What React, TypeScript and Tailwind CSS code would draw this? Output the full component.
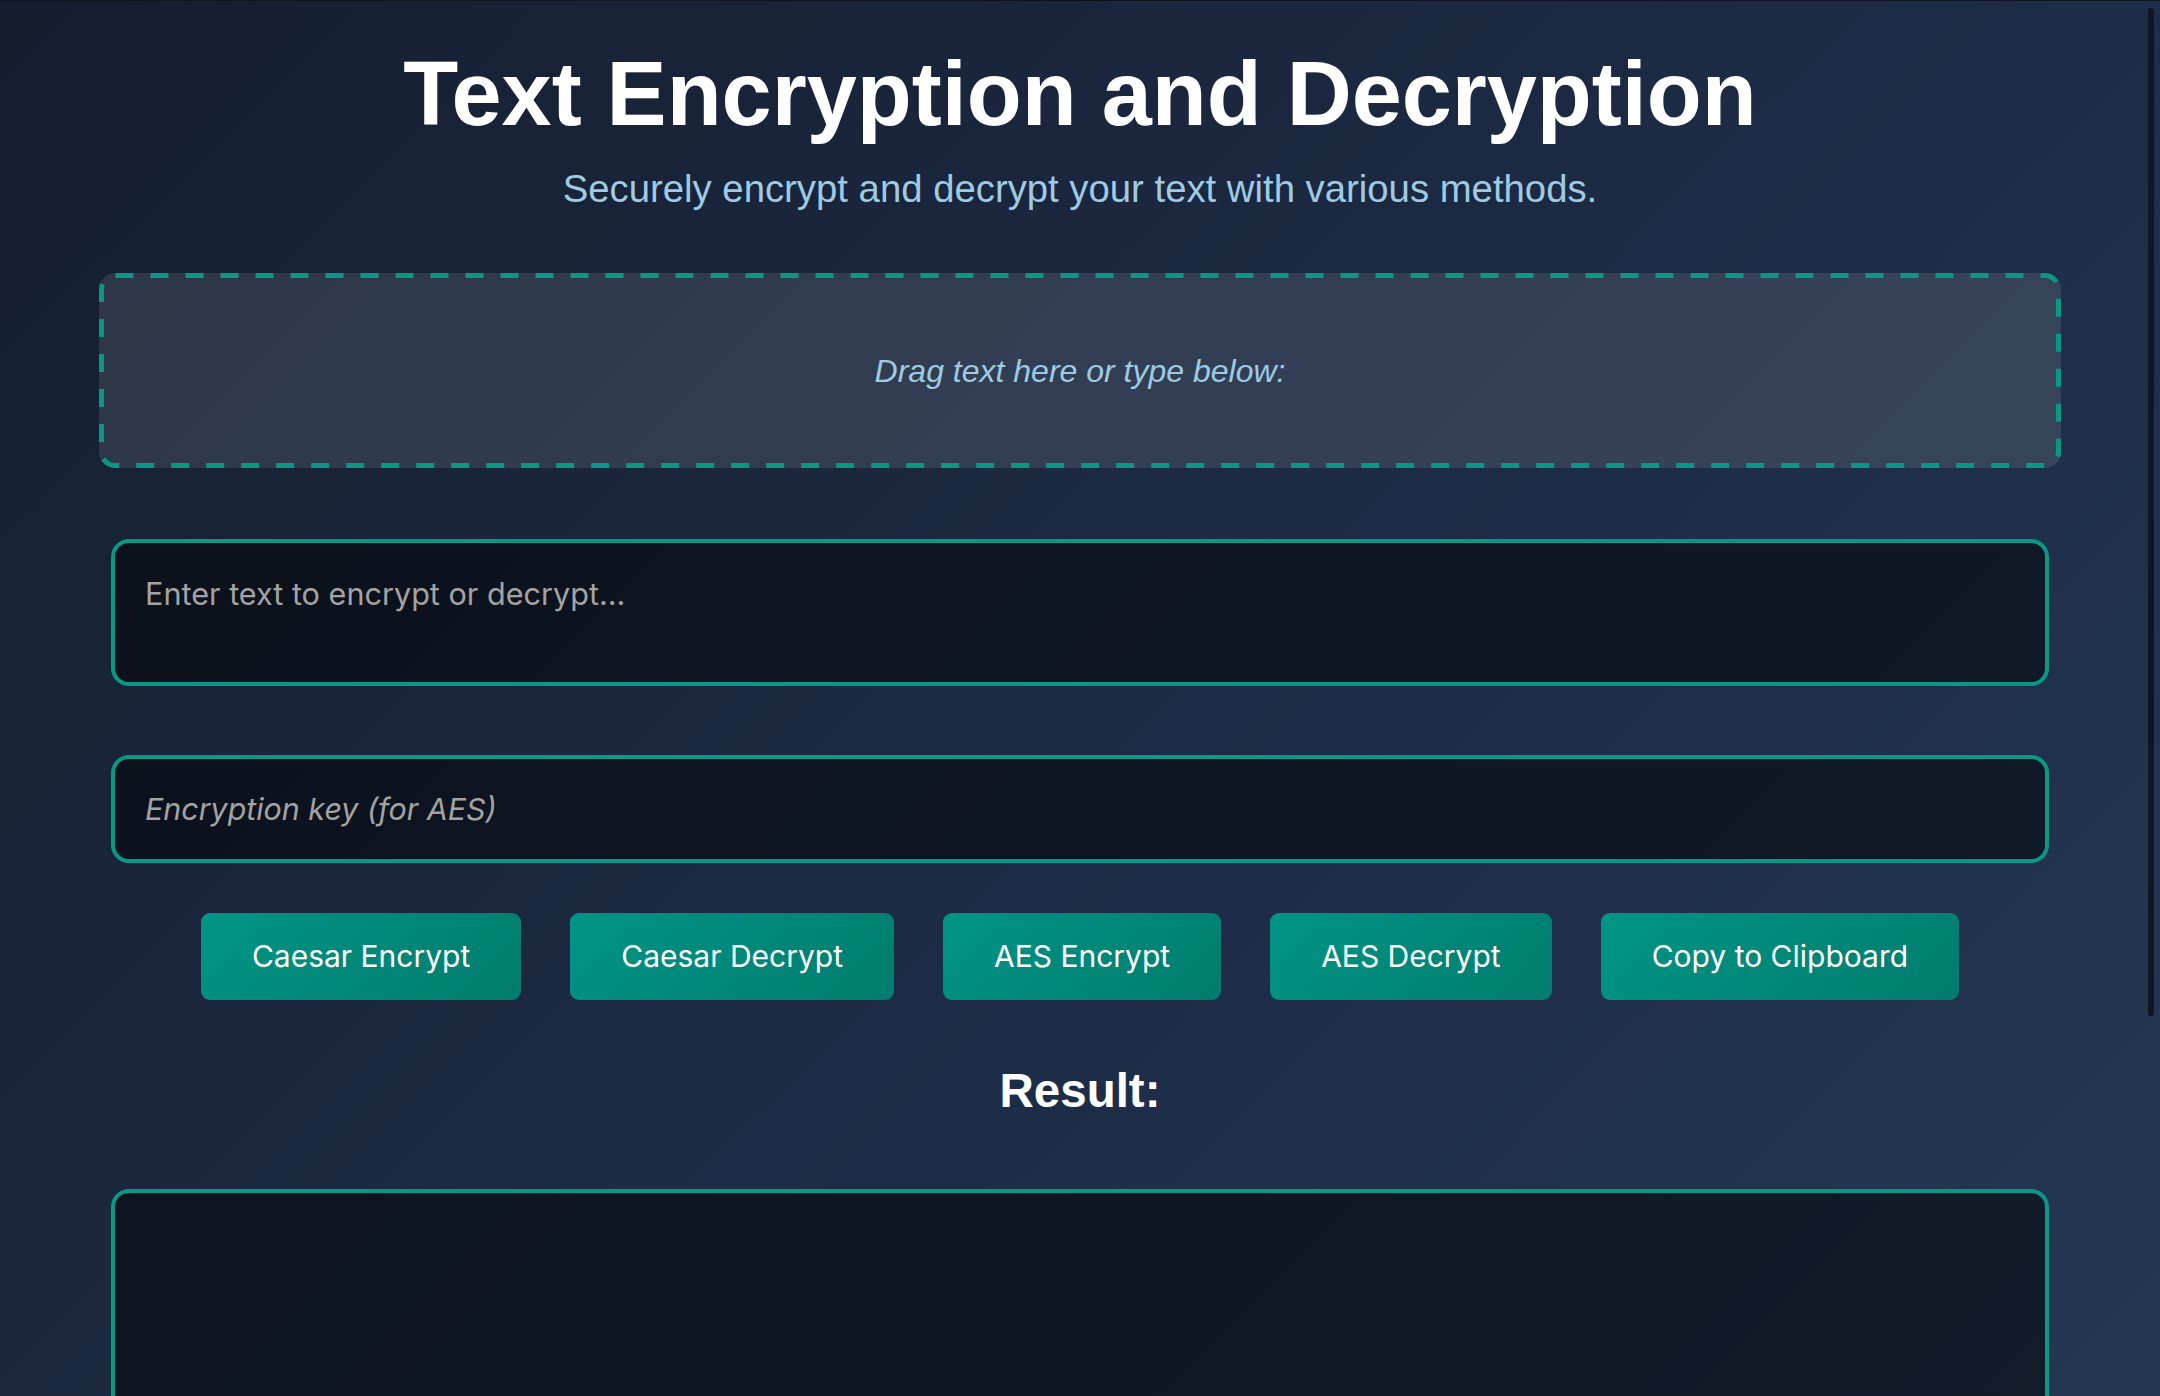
import React, { useState } from 'react'

const buttons = ['Caesar Encrypt', 'Caesar Decrypt', 'AES Encrypt', 'AES Decrypt', 'Copy to Clipboard']

export default function App() {
  const [text, setText] = useState('')
  const [key, setKey] = useState('')

  return (
    <div className="relative h-screen w-full overflow-hidden border-t border-[#0f1521] bg-[linear-gradient(135deg,#151e2f_0%,#1c2a44_50%,#243752_100%)]">
      <div className="px-[99px] pt-[48px]">
        {/* Header */}
        <h1 className="text-center font-['Liberation_Sans',Arial,sans-serif] text-[90px] font-bold leading-none text-white">
          Text Encryption and Decryption
        </h1>
        <p className="mt-[31px] text-center font-['Liberation_Sans',Arial,sans-serif] text-[38.3px] leading-none text-[#9ecbe3]">
          Securely encrypt and decrypt your text with various methods.
        </p>

        {/* Drop zone, dashes drawn by svg so they match the long dash pattern */}
        <div className="relative mt-[65px] flex h-[195px] items-center justify-center rounded-[16px] bg-white/10">
          <svg className="pointer-events-none absolute inset-0" width="1962" height="195">
            <rect
              x="2.5"
              y="2.5"
              width="1957"
              height="190"
              rx="14"
              fill="none"
              stroke="#0a9886"
              strokeWidth="5"
              strokeDasharray="18 17"
            />
          </svg>
          <span className="font-['Liberation_Sans',Arial,sans-serif] text-[32px] italic text-[#9ccbe3]">
            Drag text here or type below:
          </span>
        </div>

        <div className="mx-[12px] mt-[71px]">
          <textarea
            value={text}
            onChange={e => setText(e.target.value)}
            placeholder="Enter text to encrypt or decrypt..."
            className="block h-[147px] w-full resize-none rounded-[18px] border-4 border-[#0a9886] bg-black/50 px-[30px] pt-[28px] font-['Inter',sans-serif] text-[30.6px] leading-[45px] text-white outline-none placeholder:text-[#a3a3a3]"
          />

          <input
            value={key}
            onChange={e => setKey(e.target.value)}
            placeholder="Encryption key (for AES)"
            className="mt-[69px] block h-[108px] w-full rounded-[18px] border-4 border-[#0a9886] bg-black/50 px-[30px] font-['Inter',sans-serif] text-[30.4px] italic text-white outline-none placeholder:text-[#a3a3a3]"
          />

          {/* Actions */}
          <div className="mt-[50px] flex flex-wrap justify-center gap-[49px]">
            {buttons.map(label => (
              <button
                key={label}
                className="flex h-[87px] items-center rounded-[9px] bg-[linear-gradient(135deg,#009585,#007c6e)] px-[51px] font-['Inter',sans-serif] text-[30px] text-white"
              >
                {label}
              </button>
            ))}
          </div>

          <h2 className="mt-[67px] text-center font-['Liberation_Sans',Arial,sans-serif] text-[47.5px] font-bold leading-none text-white">
            Result:
          </h2>

          <div className="mt-[74px] h-[320px] rounded-[18px] border-4 border-[#0a9886] bg-black/50" />
        </div>
      </div>

      {/* scrollbar thumb */}
      <div className="absolute right-[6px] top-[7px] h-[1008px] w-[6px] rounded-full bg-[#0f1622]" />
    </div>
  )
}
